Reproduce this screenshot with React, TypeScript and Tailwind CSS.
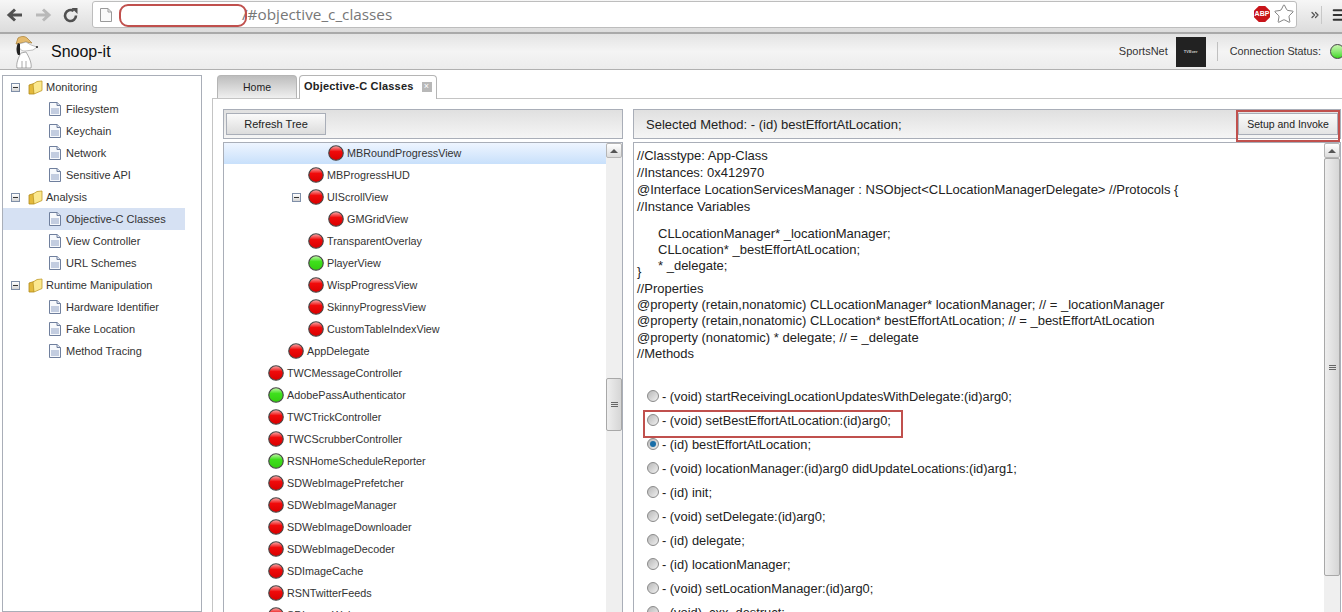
import { ChevronsRight, Menu, Star } from "lucide-react";

const sans = "font-['Liberation_Sans',Arial,sans-serif]";

const navGroups = [
  { title: "Monitoring", items: ["Filesystem", "Keychain", "Network", "Sensitive API"] },
  { title: "Analysis", items: ["Objective-C Classes", "View Controller", "URL Schemes"] },
  { title: "Runtime Manipulation", items: ["Hardware Identifier", "Fake Location", "Method Tracing"] },
];

// depth is in 20px steps, the way the tree indents
const classes = [
  { name: "MBRoundProgressView", depth: 3, selected: true },
  { name: "MBProgressHUD", depth: 2 },
  { name: "UIScrollView", depth: 2, toggle: true },
  { name: "GMGridView", depth: 3 },
  { name: "TransparentOverlay", depth: 2 },
  { name: "PlayerView", depth: 2, on: true },
  { name: "WispProgressView", depth: 2 },
  { name: "SkinnyProgressView", depth: 2 },
  { name: "CustomTableIndexView", depth: 2 },
  { name: "AppDelegate", depth: 1 },
  { name: "TWCMessageController", depth: 0 },
  { name: "AdobePassAuthenticator", depth: 0, on: true },
  { name: "TWCTrickController", depth: 0 },
  { name: "TWCScrubberController", depth: 0 },
  { name: "RSNHomeScheduleReporter", depth: 0, on: true },
  { name: "SDWebImagePrefetcher", depth: 0 },
  { name: "SDWebImageManager", depth: 0 },
  { name: "SDWebImageDownloader", depth: 0 },
  { name: "SDWebImageDecoder", depth: 0 },
  { name: "SDImageCache", depth: 0 },
  { name: "RSNTwitterFeeds", depth: 0 },
  { name: "SDImageWeb", depth: 0 },
];

const depthClass = ["pl-[44px]", "pl-[64px]", "pl-[84px]", "pl-[104px]"];

const methods = [
  "- (void) startReceivingLocationUpdatesWithDelegate:(id)arg0;",
  "- (void) setBestEffortAtLocation:(id)arg0;",
  "- (id) bestEffortAtLocation;",
  "- (void) locationManager:(id)arg0 didUpdateLocations:(id)arg1;",
  "- (id) init;",
  "- (void) setDelegate:(id)arg0;",
  "- (id) delegate;",
  "- (id) locationManager;",
  "- (void) setLocationManager:(id)arg0;",
  "- (void) .cxx_destruct;",
];

const Minus = () => (
  <span className="flex h-[9px] w-[9px] shrink-0 items-center justify-center border border-[#7f8fa8] bg-gradient-to-b from-white to-[#d5d5d5]">
    <span className="h-px w-[5px] bg-[#333]" />
  </span>
);

const Folder = () => (
  <svg width="15" height="15" viewBox="0 0 15 15" className="shrink-0">
    <path d="M1 5 L6 3.5 L6 14 L1 14 Z" fill="#e3b93c" stroke="#b18a1c" strokeWidth="0.8" />
    <path d="M5 4 L9 1.5 L14 1 L14 10.5 L6 14 Z" fill="#fbe88f" stroke="#c09a28" strokeWidth="0.8" />
  </svg>
);

const Doc = () => (
  <svg width="12" height="14" viewBox="0 0 12 14" className="shrink-0">
    <path d="M0.5 0.5 H8 L11.5 3.5 V13.5 H0.5 Z" fill="#f7f9fc" stroke="#6f7f9d" />
    <path d="M8 0.5 V3.5 H11.5" fill="#dfe5ef" stroke="#6f7f9d" />
    <rect x="2" y="6" width="8" height="6" fill="#c3cde0" />
  </svg>
);

const Ball = ({ on, size = 16 }: { on?: boolean; size?: number }) => {
  const id = on ? "ballOn" : "ballOff";
  return (
    <svg width={size} height={size} viewBox="0 0 17 17" className="shrink-0">
      <defs>
        <linearGradient id={id} x1="0" y1="0" x2="0" y2="1">
          <stop offset="0" stopColor={on ? "#c8f7b0" : "#f7b0b0"} />
          <stop offset="0.4" stopColor={on ? "#3fe01c" : "#f00a0a"} />
          <stop offset="1" stopColor={on ? "#33cc10" : "#d80000"} />
        </linearGradient>
      </defs>
      <circle cx="8.5" cy="8.5" r="7.7" fill={`url(#${id})`} stroke="#444" strokeWidth="1.2" />
    </svg>
  );
};

const Radio = ({ checked }: { checked?: boolean }) => (
  <span className="flex h-[12px] w-[12px] shrink-0 items-center justify-center rounded-full border border-[#8a8a8a] bg-gradient-to-br from-[#b8b8b8] to-[#f0f0f0]">
    {checked && <span className="h-[6px] w-[6px] rounded-full bg-[#1a6ea8]" />}
  </span>
);

const Arrow = () => (
  <span className="h-0 w-0 border-x-[4px] border-b-[4px] border-x-transparent border-b-[#555]" />
);

const ScrollBar = ({ thumb }: { thumb: string }) => (
  <div className="flex w-[16px] shrink-0 flex-col bg-[#efefef]">
    <div className="flex h-[15px] items-center justify-center rounded-[2px] border border-[#b5b5b5] bg-gradient-to-b from-white to-[#dcdcdc]">
      <Arrow />
    </div>
    <div className={`flex flex-col items-center justify-center gap-px rounded-[2px] border border-[#a8a8a8] bg-gradient-to-r from-[#eeeeee] to-[#d6d6d6] ${thumb}`}>
      <span className="h-px w-[7px] bg-[#666]" />
      <span className="h-px w-[7px] bg-[#666]" />
      <span className="h-px w-[7px] bg-[#666]" />
    </div>
  </div>
);

export default function App() {
  return (
    <div className={`${sans} flex h-[612px] w-[1342px] flex-col overflow-hidden bg-white text-[#222]`}>
      {/* browser chrome */}
      <div className="flex h-[34px] shrink-0 items-start border-b-2 border-[#a9a9a9] bg-gradient-to-b from-[#f6f6f6] to-[#dcdcdc] pt-[1px]">
        <div className="flex h-[28px] w-[92px] shrink-0 items-center text-[#555]">
          <svg width="18" height="16" viewBox="0 0 18 16" className="ml-[6px]">
            <path d="M16 8 H4 M9 2.5 L3 8 L9 13.5" fill="none" stroke="#505050" strokeWidth="3" />
          </svg>
          <svg width="18" height="16" viewBox="0 0 18 16" className="ml-[10px]">
            <path d="M2 8 H14 M9 2.5 L15 8 L9 13.5" fill="none" stroke="#b9b9b9" strokeWidth="3" />
          </svg>
          <svg width="17" height="17" viewBox="0 0 17 17" className="ml-[10px]">
            <path d="M14 8.5 A5.5 5.5 0 1 1 11.6 4" fill="none" stroke="#505050" strokeWidth="2.6" />
            <path d="M9.5 1 H15.5 V7 Z" fill="#505050" />
          </svg>
        </div>
        <div className="relative flex h-[27px] w-[1205px] shrink-0 items-center rounded-[3px] border border-[#bdbdbd] bg-white">
          <svg width="12" height="14" viewBox="0 0 12 14" className="ml-[7px]">
            <path d="M0.5 0.5 H8 L11.5 4 V13.5 H0.5 Z" fill="#fafafa" stroke="#9a9a9a" />
            <path d="M8 0.5 V4 H11.5" fill="none" stroke="#9a9a9a" />
          </svg>
          <span className="ml-[130px] font-['Open_Sans',sans-serif] text-[15.3px] text-[#777]">/#objective_c_classes</span>
          <span className="absolute left-[26px] top-[2px] h-[23px] w-[128px] rounded-[9px] border-2 border-[#c0504d]" />
          {/* adblock stop sign */}
          <span className="absolute right-[26px] top-[4px] flex h-[16px] w-[16px] items-center justify-center bg-[#c8141a] [clip-path:polygon(30%_0,70%_0,100%_30%,100%_70%,70%_100%,30%_100%,0_70%,0_30%)] text-[7px] font-bold text-white">ABP</span>
          <Star size={22} strokeWidth={1} className="absolute right-[1px] top-[1px] text-[#777]" />
        </div>
        <div className="flex h-[28px] w-[45px] shrink-0 items-center text-[#555]">
          <ChevronsRight size={12} strokeWidth={2.5} className="ml-[12px] shrink-0" />
          <span className="h-[18px] w-px shrink-0 bg-[#c8c8c8]" />
          <Menu size={16} strokeWidth={3} className="ml-[9px] shrink-0 text-[#333]" />
        </div>
      </div>

      {/* app header */}
      <div className="flex h-[36px] shrink-0 items-center border-b border-[#b0b0b0] bg-gradient-to-b from-[#e3e3e3] via-[#f4f4f4] to-[#ececec]">
        <svg width="26" height="34" viewBox="0 0 26 34" className="ml-[13px]">
          <path d="M3 9 L5 3 C8 1 12 1 14 3 L19 8 L13 7 Z" fill="#e5bb6e" stroke="#a87c30" strokeWidth="0.7" />
          <path d="M6 9 C6 15 9 16 12 16 L20 15 L24 12 L18 10 L13 7 Z" fill="#fff" stroke="#999" strokeWidth="0.6" />
          <path d="M5 8 C3 12 3 17 5 20 L7 20 L7 9 Z" fill="#222" />
          <path d="M8 18 C5 23 3 29 4 33 H18 C19 28 16 22 13 17 Z" fill="#fff" stroke="#888" strokeWidth="0.7" />
          <path d="M9 33 V26 M13 33 V26" stroke="#888" strokeWidth="0.7" />
          <circle cx="24" cy="12" r="1" fill="#222" />
        </svg>
        <span className="ml-[12px] text-[16px] leading-none text-[#111]">Snoop-it</span>
        <div className="ml-auto flex items-center">
          <span className="text-[11px] text-[#333]">SportsNet</span>
          <div className="ml-[8px] flex h-[30px] w-[30px] items-center justify-center bg-[#222] text-[4px] font-bold text-[#ccc]">TVEver</div>
          <span className="ml-[11px] h-[19px] w-px bg-[#c0c0c0]" />
          <span className="ml-[12px] text-[10.8px] text-[#333]">Connection Status:</span>
          <span className="ml-[9px] mr-[-3px] h-[15px] w-[15px] rounded-full border border-[#444] bg-gradient-to-b from-[#c8f7b0] to-[#38d814]" />
        </div>
      </div>

      <div className="flex min-h-0 flex-1 pl-[2px] pt-[5px]">
        {/* sidebar */}
        <div className="w-[200px] shrink-0 border border-[#a9aeb8]">
          {navGroups.map((g) => (
            <div key={g.title}>
              <div className="flex h-[22px] items-center text-[11px] text-[#333]">
                <span className="ml-[8px]"><Minus /></span>
                <span className="ml-[8px]"><Folder /></span>
                <span className="ml-[3px]">{g.title}</span>
              </div>
              {g.items.map((item) => (
                <div
                  key={item}
                  className={`flex h-[22px] w-[182px] items-center pl-[46px] text-[11px] text-[#333] ${item === "Objective-C Classes" ? "bg-[#d6e1f3]" : ""}`}
                >
                  <Doc />
                  <span className="ml-[5px]">{item}</span>
                </div>
              ))}
            </div>
          ))}
        </div>

        {/* main */}
        <div className="ml-[10px] flex min-w-0 flex-1 flex-col">
          <div className="flex h-[23px] shrink-0 items-end pl-[5px]">
            <div className="flex h-[23px] w-[80px] items-center justify-center rounded-t-[4px] border border-b-0 border-[#b5b5b5] bg-gradient-to-b from-[#bdbdbd] to-[#f0f0f0] pt-[1px] text-[10.5px] text-[#222]">Home</div>
            <div className="relative z-10 ml-[2px] -mb-px flex h-[24px] w-[138px] items-center rounded-t-[4px] border border-b-0 border-[#b5b5b5] bg-white pb-[2px] pl-[4px] text-[11px] font-bold tracking-[0.2px] text-[#222]">
              Objective-C Classes
              <span className="ml-[8px] flex h-[10px] w-[10px] items-center justify-center bg-[#b8b8b8] text-[9px] leading-none font-normal text-white">×</span>
            </div>
          </div>
          <div className="flex min-h-0 flex-1 gap-[10px] border-t border-l border-[#c4c4c4] pl-[10px] pt-[10px] pr-[1px]">
            {/* class tree */}
            <div className="flex w-[400px] shrink-0 flex-col">
              <div className="flex h-[30px] shrink-0 items-center border border-[#a9aeb8] bg-gradient-to-b from-[#e0e0e0] to-[#f5f5f5] pl-[2px]">
                <button className="h-[22px] w-[100px] border border-[#a9aeb8] bg-gradient-to-b from-[#fafafa] to-[#dcdcdc] text-[11px] text-[#222]">Refresh Tree</button>
              </div>
              <div className="mt-[3px] flex min-h-0 flex-1 overflow-hidden border border-b-0 border-[#a9aeb8]">
                <div className="-mt-px min-w-0 flex-1">
                  {classes.map((c) => (
                    <div
                      key={c.name}
                      className={`relative flex h-[22px] items-center text-[10.8px] text-[#333] ${depthClass[c.depth]} ${c.selected ? "bg-gradient-to-b from-[#f0f6ff] to-[#c8e0fb]" : ""}`}
                    >
                      {c.toggle && <span className="absolute left-[68px] top-[7px]"><Minus /></span>}
                      <Ball on={c.on} />
                      <span className="ml-[3px]">{c.name}</span>
                    </div>
                  ))}
                </div>
                <ScrollBar thumb="mt-[220px] h-[53px]" />
              </div>
            </div>

            {/* method source */}
            <div className="relative flex min-w-0 flex-1 flex-col">
              <div className="flex h-[30px] shrink-0 items-center justify-between border border-[#a9aeb8] bg-gradient-to-b from-[#e0e0e0] to-[#f5f5f5]">
                <span className="ml-[12px] pt-[1px] text-[13px] text-[#222]">Selected Method: - (id) bestEffortAtLocation;</span>
                <button className="mr-[2px] h-[22px] w-[100px] border border-[#a9aeb8] bg-gradient-to-b from-[#fafafa] to-[#e4e4e4] pt-[1px] text-[10.5px] text-[#222]">Setup and Invoke</button>
              </div>
              <span className="absolute right-[1px] top-[1px] h-[32px] w-[104px] border-2 border-[#c0504d]" />
              <div className="mt-[3px] flex min-h-0 flex-1 overflow-hidden border border-b-0 border-[#a9aeb8]">
                <div className="relative min-w-0 flex-1 pl-[3px] pt-[4px] text-[13px] leading-[17px] text-[#222]">
                  <p>//Classtype: App-Class</p>
                  <p>//Instances: 0x412970</p>
                  <p>@Interface LocationServicesManager : NSObject&lt;CLLocationManagerDelegate&gt; //Protocols {"{"}</p>
                  <p>//Instance Variables</p>
                  <div className="mt-[11px] pl-[21px] leading-[16px]">
                    <p>CLLocationManager* _locationManager;</p>
                    <p>CLLocation* _bestEffortAtLocation;</p>
                    <p>* _delegate;</p>
                  </div>
                  <p className="-mt-[11px]">{"}"}</p>
                  <p className="mt-px leading-[16px]">//Properties</p>
                  <p className="leading-[16px]">@property (retain,nonatomic) CLLocationManager* locationManager; // = _locationManager</p>
                  <p className="leading-[16px]">@property (retain,nonatomic) CLLocation* bestEffortAtLocation; // = _bestEffortAtLocation</p>
                  <p className="mt-px leading-[16px]">@property (nonatomic) * delegate; // = _delegate</p>
                  <p className="leading-[16px]">//Methods</p>
                  <div className="mt-[22px] text-[12.85px]">
                    {methods.map((m, i) => (
                      <div key={m} className="flex h-[24px] items-center pl-[10px]">
                        <Radio checked={i === 2} />
                        <span className="ml-[3px]">{m}</span>
                      </div>
                    ))}
                  </div>
                  <span className="absolute left-[9px] top-[267px] h-[28px] w-[260px] border-2 border-[#c0504d]" />
                </div>
                <ScrollBar thumb="h-[418px]" />
              </div>
            </div>
          </div>
        </div>
      </div>
    </div>
  );
}
